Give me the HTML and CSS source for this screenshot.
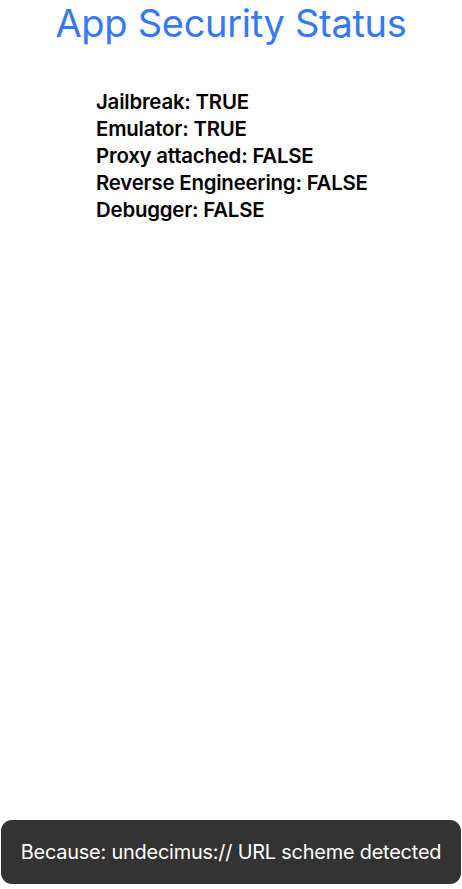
FILE: index.html
```html
<!DOCTYPE html>
<html>
<head>
<meta charset="utf-8">
<link rel="stylesheet" href="styles.css">
</head>
<body>
<div class="screen">
  <h1 class="title">App Security Status</h1>
  <ul class="status-list">
    <li>Jailbreak: TRUE</li>
    <li>Emulator: TRUE</li>
    <li>Proxy attached: FALSE</li>
    <li>Reverse Engineering: FALSE</li>
    <li>Debugger: FALSE</li>
  </ul>
  <div class="spacer"></div>
  <div class="toast">Because: undecimus:// URL scheme detected</div>
</div>
</body>
</html>
```
FILE: styles.css
```css
html, body {
  margin: 0;
  padding: 0;
  background: #ffffff;
}
.screen {
  width: 462px;
  height: 889px;
  display: flex;
  flex-direction: column;
  font-family: Inter, "Noto Sans", sans-serif;
  box-sizing: border-box;
}
.title {
  margin: 0;
  padding-top: 0;
  text-align: center;
  font-weight: 400;
  font-size: 38px;
  line-height: 46px;
  color: #3478f6;
  letter-spacing: -0.3px;
}
.status-list {
  list-style: none;
  margin: 42px 0 0 0;
  padding: 0 0 0 96px;
}
.status-list li {
  font-size: 20.4px;
  font-weight: 600;
  line-height: 27px;
  color: #000;
  letter-spacing: -0.2px;
}
.spacer {
  flex: 1;
}
.toast {
  margin: 0 1px 5px 1px;
  height: 64px;
  border-radius: 11px;
  background: #333333;
  color: #ffffff;
  font-size: 19.9px;
  display: flex;
  align-items: center;
  justify-content: center;
  letter-spacing: -0.2px;
}
```
